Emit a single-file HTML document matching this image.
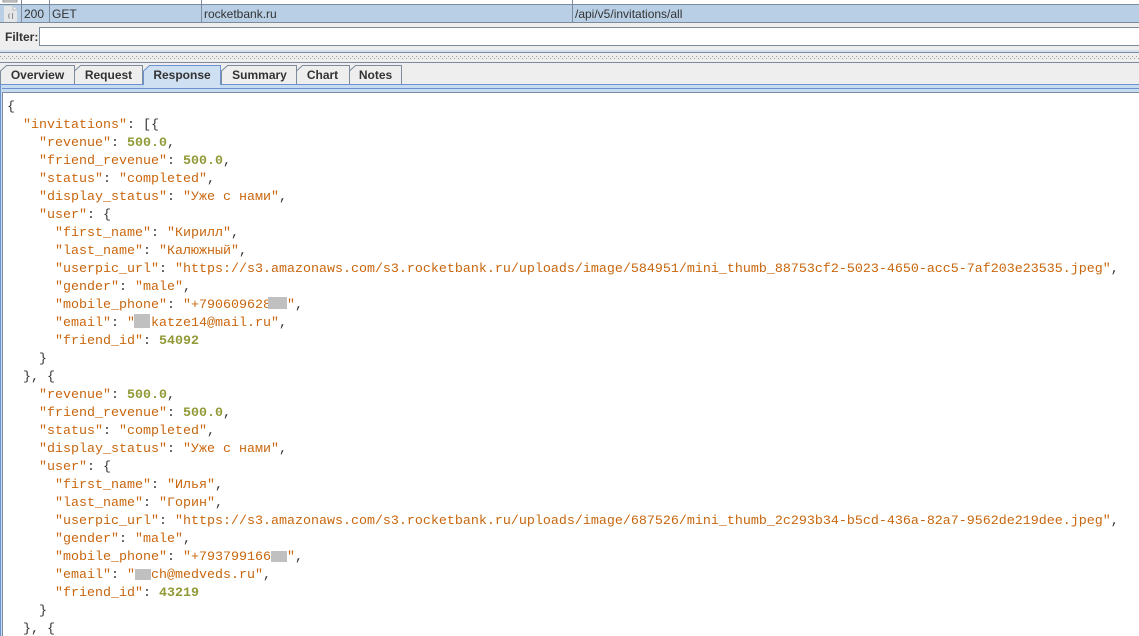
<!DOCTYPE html>
<html><head><meta charset="utf-8"><style>
html,body{margin:0;padding:0;background:#fff}
#r{position:relative;width:1139px;height:636px;overflow:hidden;background:#fff;font-family:"Liberation Sans",sans-serif}
.a{position:absolute}
.h{position:absolute;left:0;width:1139px}
.c{position:absolute;top:5px;height:18px;font-size:12px;line-height:18px;color:#333}
.t{position:absolute;top:65px;font-size:12px;font-weight:bold;line-height:20px;color:#333;text-align:center}
pre{position:absolute;left:7px;top:99px;margin:0;font-family:"Liberation Mono",monospace;font-size:13.33px;line-height:18px;color:#333}
s{text-decoration:none;color:#c9660d}
b{font-weight:bold;color:#919a37}
.k{position:absolute;background:#c0c0c0}
</style></head><body><div id="r">
<div class="h" style="top:0;height:4px;background:#fff"></div>
<div class="h" style="top:4px;height:1px;background:#7c8c9c"></div>
<div class="h" style="top:5px;height:17px;background:#b8cfe5"></div>
<div class="h" style="top:22px;height:1px;background:#7c8c9c"></div>
<div class="h" style="top:23px;height:27px;background:#eee"></div>
<div class="a" style="left:21px;top:0;width:1px;height:22px;background:#7c8c9c"></div>
<div class="a" style="left:49px;top:0;width:1px;height:22px;background:#7c8c9c"></div>
<div class="a" style="left:201px;top:0;width:1px;height:22px;background:#7c8c9c"></div>
<div class="a" style="left:572px;top:0;width:1px;height:22px;background:#7c8c9c"></div>
<svg class="a" style="left:0;top:0" width="22" height="23"><rect x="3" y="0" width="14" height="2" fill="#ddd" stroke="#999" stroke-width="1"/><path d="M4 6H13L17 10V22H4Z" fill="#e4e6e8"/><path d="M13 6V10H17" fill="#f6f6f6" stroke="#b5b9bd"/><path d="M9.500 13.500C8.500 15 8.500 17 9.500 18.500M12.500 13v6" stroke="#8a8a8a" fill="none"/></svg>
<div class="c" style="left:24px">200</div>
<div class="c" style="left:52px">GET</div>
<div class="c" style="left:204px">rocketbank.ru</div>
<div class="c" style="left:575px">/api/v5/invitations/all</div>
<div class="a" style="left:5px;top:28px;font-size:12px;font-weight:bold;line-height:19px;color:#333">Filter:</div>
<div class="a" style="left:39px;top:27px;width:1100px;height:17px;background:#fff;border-top:1px solid #7c8c9c;border-bottom:1px solid #7c8c9c;border-left:1px solid #7c8c9c"></div>
<div class="h" style="top:50px;height:2px;background:#d3e1ef"></div>
<div class="h" style="top:52px;height:1px;background:#7c8c9c"></div>
<div class="h" style="top:53px;height:9px;background:#eee"></div>
<svg class="a" style="left:0;top:56px" width="1139" height="4"><line x1="0" x2="1139" y1="0.500" y2="0.500" stroke="#9a9a9a" stroke-dasharray="1 3"/><line x1="2" x2="1139" y1="2.500" y2="2.500" stroke="#9a9a9a" stroke-dasharray="1 3"/></svg>
<div class="h" style="top:62px;height:1px;background:#7c8c9c"></div>
<div class="h" style="top:63px;height:21px;background:#eee"></div>
<div class="h" style="top:84px;height:1px;background:#6d92d0"></div>
<div class="h" style="top:85px;height:3px;background:#c8dcf1"></div>
<div class="h" style="top:88px;height:1px;background:#6d92d0"></div>
<div class="h" style="top:89px;height:3px;background:#c8dcf1"></div>
<div class="h" style="top:92px;height:1px;background:#7c8c9c"></div>
<div class="a" style="left:0;top:84px;width:1px;height:552px;background:#6d92d0"></div>
<div class="a" style="left:1px;top:85px;width:1px;height:551px;background:#c8dcf1"></div>
<div class="a" style="left:2px;top:92px;width:1px;height:544px;background:#7c8c9c"></div>
<svg class="a" style="left:0;top:64px" width="410" height="24">
<g fill="#eee" stroke="#7c8c9c">
<path d="M0.500 20V7L6.500 1.500H74.500V20"/>
<path d="M74.500 20V7L80.500 1.500H142.500V20"/>
<path d="M221.500 20V7L227.500 1.500H296.500V20"/>
<path d="M296.500 20V7L302.500 1.500H349.500V20"/>
<path d="M349.500 20V7L355.500 1.500H401.500V20"/>
</g>
<path d="M143.500 21V7L149.500 1.500H220.500V21" fill="#cfe0f3" stroke="#6d92d0"/>
<rect x="144" y="20" width="76" height="5" fill="#cfe0f3"/>
</svg>
<div class="t" style="left:1px;width:73px">Overview</div>
<div class="t" style="left:74px;width:69px">Request</div>
<div class="t" style="left:143px;width:78px">Response</div>
<div class="t" style="left:222px;width:75px">Summary</div>
<div class="t" style="left:296px;width:53px">Chart</div>
<div class="t" style="left:349px;width:53px">Notes</div>
<pre>{
  <s>"invitations"</s>: [{
    <s>"revenue"</s>: <b>500.0</b>,
    <s>"friend_revenue"</s>: <b>500.0</b>,
    <s>"status"</s>: <s>"completed"</s>,
    <s>"display_status"</s>: <s>"Уже с нами"</s>,
    <s>"user"</s>: {
      <s>"first_name"</s>: <s>"Кирилл"</s>,
      <s>"last_name"</s>: <s>"Калюжный"</s>,
      <s>"userpic_url"</s>: <s>"https://s3.amazonaws.com/s3.rocketbank.ru/uploads/image/584951/mini_thumb_88753cf2-5023-4650-acc5-7af203e23535.jpeg"</s>,
      <s>"gender"</s>: <s>"male"</s>,
      <s>"mobile_phone"</s>: <s>"+790609628  "</s>,
      <s>"email"</s>: <s>"  katze14@mail.ru"</s>,
      <s>"friend_id"</s>: <b>54092</b>
    }
  }, {
    <s>"revenue"</s>: <b>500.0</b>,
    <s>"friend_revenue"</s>: <b>500.0</b>,
    <s>"status"</s>: <s>"completed"</s>,
    <s>"display_status"</s>: <s>"Уже с нами"</s>,
    <s>"user"</s>: {
      <s>"first_name"</s>: <s>"Илья"</s>,
      <s>"last_name"</s>: <s>"Горин"</s>,
      <s>"userpic_url"</s>: <s>"https://s3.amazonaws.com/s3.rocketbank.ru/uploads/image/687526/mini_thumb_2c293b34-b5cd-436a-82a7-9562de219dee.jpeg"</s>,
      <s>"gender"</s>: <s>"male"</s>,
      <s>"mobile_phone"</s>: <s>"+793799166  "</s>,
      <s>"email"</s>: <s>"  ch@medveds.ru"</s>,
      <s>"friend_id"</s>: <b>43219</b>
    }
  }, {</pre>
<div class="k" style="left:268px;top:297px;width:19px;height:12px"></div>
<div class="k" style="left:134px;top:314px;width:16px;height:14px"></div>
<div class="k" style="left:271px;top:551px;width:16px;height:11px"></div>
<div class="k" style="left:135px;top:569px;width:16px;height:11px"></div>
</div></body></html>
